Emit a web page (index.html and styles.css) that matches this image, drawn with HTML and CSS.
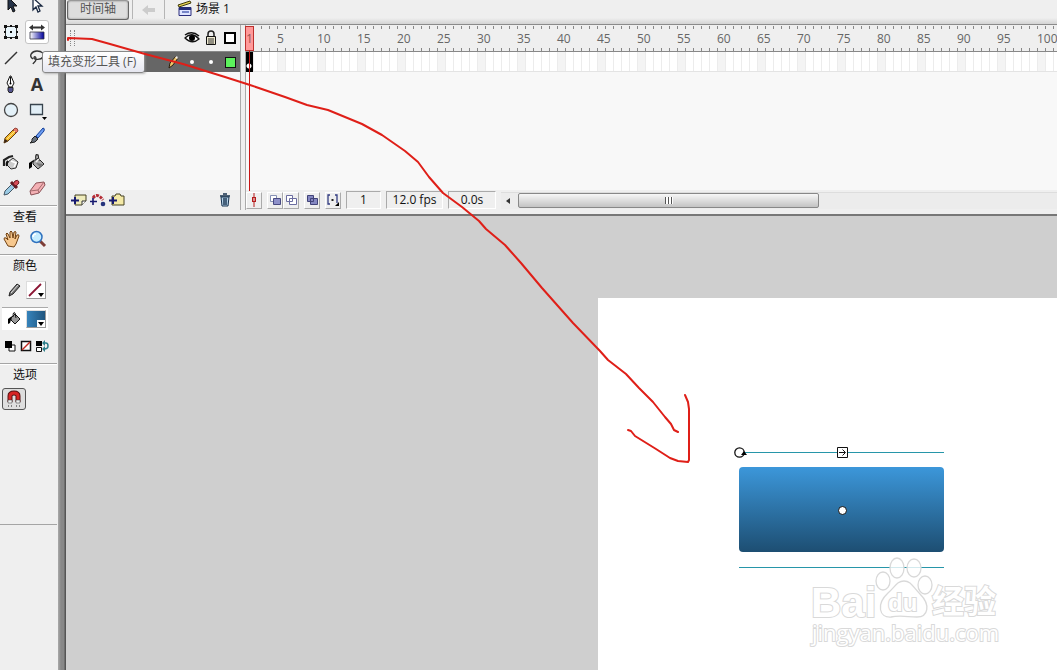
FILE: index.html
```html
<!DOCTYPE html>
<html lang="zh-CN">
<head>
<meta charset="utf-8">
<title>场景 1</title>
<link rel="stylesheet" href="styles.css">
</head>
<body>
<div class="app">
  <aside class="tools">
    <div class="tool-grid">
      <button class="tool" aria-label="选择"><svg width="18" height="26"><path d="M6 4v13l3-3 2 5 2-1-2-5h4z" fill="#253348" stroke="#111"/></svg></button>
      <button class="tool" aria-label="部分选取"><svg width="18" height="26"><path d="M5 5v12l3-3 2 5 2-1-2-5h4z" fill="#fff" stroke="#1b2a42" stroke-width="1.3"/></svg></button>
      <button class="tool" aria-label="任意变形"><svg width="18" height="18"><path d="M3.500 3.500h11v11h-11z" fill="#e9f5fb" stroke="#333"/><path d="M2 2h3v3H2zM13 2h3v3h-3zM2 13h3v3H2zM13 13h3v3h-3zM8 2h2v2H8zM8 14h2v2H8zM2 8h2v2H2zM14 8h2v2h-2zM8 8h2v2H8z" fill="#111"/></svg></button>
      <button class="tool active" aria-label="填充变形"><svg width="18" height="18"><defs><linearGradient id="gf"><stop offset="0" stop-color="#fff"/><stop offset="1" stop-color="#00009b"/></linearGradient></defs><path d="M2 9h14v7H2z" fill="url(#gf)" stroke="#334" stroke-width=".8"/><path d="M1 4.500l4-3v2h2v2H5v2zM17 4.500l-4-3v2h-2v2h2v2zM7 3.500h4v2H7z" fill="#333"/></svg></button>
      <button class="tool" aria-label="线条"><svg width="18" height="18"><path d="M3 15L15 3" stroke="#333" stroke-width="1.500"/></svg></button>
      <button class="tool" aria-label="套索"><svg width="18" height="18"><path d="M5 10C0 7 4 2 9 2s8 3 6 6-9 3-9 1 2-2 2 1-2 3-3 5" fill="none" stroke="#333" stroke-width="1.400"/></svg></button>
      <button class="tool" aria-label="钢笔"><svg width="18" height="18"><path d="M8 1L5 8l2 4h3l2-4-3-7z" fill="#fff" stroke="#111"/><path d="M8.500 2v7" stroke="#111"/><circle cx="8.500" cy="8.500" r="1"/><path d="M6 12.500h5v3l-1 2H7l-1-2z" fill="#55558f" stroke="#222"/></svg></button>
      <button class="tool letter">A</button>
      <button class="tool" aria-label="椭圆"><svg width="18" height="18"><circle cx="9" cy="9" r="6.500" fill="#e4f1f8" stroke="#444" stroke-width="1.300"/></svg></button>
      <button class="tool" aria-label="矩形"><svg width="20" height="20"><path d="M3.500 4.500h12v10h-12z" fill="#e1eef6" stroke="#38444e" stroke-width="1.300"/><path d="M15 17h5l-2.500 3z"/></svg></button>
      <button class="tool" aria-label="铅笔"><svg width="18" height="18"><path d="M2 16l1-5L12 2l3 3-9 9z" fill="#f4bb2d" stroke="#664012"/><path d="M11 3l2-2q3 0 3 3l-2 2z" fill="#e77968" stroke="#85352c" stroke-width=".8"/><path d="M2 16l1-4 3 2z" fill="#392519"/><path d="M5 12l8-8" stroke="#ffe38a"/></svg></button>
      <button class="tool" aria-label="刷子"><svg width="18" height="18"><path d="M8 9l7-8q2 0 1 3l-6 7z" fill="#6b9cf1" stroke="#123e98"/><path d="M7 9l3 3q-2 4-8 4 3-2 2-4z" fill="#68717e" stroke="#222"/></svg></button>
      <button class="tool" aria-label="墨水瓶"><svg width="18" height="18"><path d="M2 13V7l5-3 4-1" fill="none" stroke="#222" stroke-width="2.200"/><path d="M6 9l5-4 5 4-2 6-5 1-4-4z" fill="#ccc" stroke="#333"/><path d="M9 8l5 2-2 4" fill="none" stroke="#fff" stroke-width="1.500"/><path d="M6 8q-2 2-1 5" fill="none" stroke="#111" stroke-width="2"/></svg></button>
      <button class="tool" aria-label="颜料桶"><svg width="18" height="18"><path d="M5 9l5-4 6 6-6 5-5-5z" fill="#aaa" stroke="#222"/><path d="M8 7q-1-7 2-5l1 6" fill="none" stroke="#222" stroke-width="1.300"/><path d="M7 6l-6 4v6l3-2v-4z"/><path d="M8 10l4 4 3-3" fill="#777"/><path d="M8 9l3-3" stroke="#eee" stroke-width="1.500"/></svg></button>
      <button class="tool" aria-label="滴管"><svg width="18" height="18"><path d="M2 16l1-4 7-7 3 3-7 7z" fill="#9bcbe5" stroke="#445665"/><path d="M9 3l6 6" stroke="#671b24" stroke-width="3"/><path d="M11 5l2-3q3-2 4 1 0 2-3 4z" fill="#d64c58" stroke="#6a1a22"/></svg></button>
      <button class="tool" aria-label="橡皮擦"><svg width="18" height="18"><path d="M2 12l6-8 8-1 1 3-6 8-8 2z" fill="#f4b0b4" stroke="#8b5055"/><path d="M2 12l8-1 6-8M10 11l1 3" fill="none" stroke="#a46a6d"/></svg></button>
    </div>
    <section class="group view-group">
      <h2>查看</h2>
      <div class="pair">
        <button class="tool" aria-label="手形"><svg width="18" height="18"><path d="M5 16L1 9q0-2 2-1l2 2-2-6q1-2 2 0l2 4V2q1-2 2 0l1 6 1-6q2-1 2 0l-1 7 2-4q2-1 2 1l-3 8-2 3z" fill="#f7c88e" stroke="#704113"/></svg></button>
        <button class="tool" aria-label="缩放"><svg width="18" height="18"><path d="M11 11l5 5" stroke="#7d3d37" stroke-width="3"/><circle cx="7.500" cy="7" r="5.500" fill="#c6edff" stroke="#2f72bf" stroke-width="1.500"/><path d="M4 7q0-3 3-3" stroke="#fff" fill="none" stroke-width="1.500"/></svg></button>
      </div>
    </section>
    <section class="group color-group">
      <h2>颜色</h2>
      <div class="color-row stroke-row">
        <svg width="16" height="16"><path d="M3 14l1-4 7-8 3 2-7 8z" fill="#777" stroke="#222"/><path d="M5 11l7-8" stroke="#ddd"/></svg>
        <button class="swatch" aria-label="笔触颜色"><svg width="18" height="16"><path d="M2 14L14 2" stroke="#8c1534" stroke-width="1.800"/><path d="M11 11h6l-3 4z"/></svg></button>
      </div>
      <div class="color-row fill-row">
        <svg width="16" height="16"><path d="M5 7l4-4 5 5-5 5-4-4z" fill="#999" stroke="#111"/><path d="M7 6q0-6 2-4l1 5" fill="none" stroke="#111"/><path d="M6 5L2 8v5l2-1z"/></svg>
        <button class="swatch fill" aria-label="填充颜色"><svg width="18" height="16"><path d="M10 9h8v7h-8z" fill="#fff"/><path d="M11 11h6l-3 4z"/></svg></button>
      </div>
      <div class="color-actions">
        <button aria-label="黑白"><svg width="12" height="12"><path d="M5 5h6v6H5z" fill="#fff" stroke="#111"/><path d="M1 1h7v7H1z"/></svg></button>
        <button aria-label="没有颜色"><svg width="12" height="12"><path d="M1.500 1.500h9v9h-9z" fill="#fff" stroke="#111" stroke-width="1.500"/><path d="M2 10l8-8" stroke="#c22a20" stroke-width="1.500"/></svg></button>
        <button aria-label="交换颜色"><svg width="13" height="12"><path d="M0 1h6v5H0z"/><path d="M.500 7.500h5v4h-5z" fill="#fff" stroke="#111"/><path d="M7 3h3q2 0 2 3t-4 3" fill="none" stroke="#2c7e8b" stroke-width="1.500"/><path d="M9 0v6L6 3zM9 6v6L6 9z" fill="#2c7e8b"/></svg></button>
      </div>
    </section>
    <section class="group option-group">
      <h2>选项</h2>
      <button class="magnet" aria-label="贴紧至对象"><svg width="16" height="18"><path d="M4 12V6q0-3 4-3t4 3v6" fill="none" stroke="#571313" stroke-width="5"/><path d="M4 12V6q0-3 4-3t4 3v6" fill="none" stroke="#d72525" stroke-width="3"/><path d="M2 10h4v3H2zM10 10h4v3h-4z" fill="#eee" stroke="#333" stroke-width=".5"/><path d="M2 16h1M5 16h1M10 16h1M13 16h1" stroke="#222"/></svg></button>
    </section>
    <div class="tip" role="tooltip">填充变形工具 (F)</div>
  </aside>
  <div class="splitter"></div>
  <main class="work">
    <header class="topbar">
      <button class="timeline-btn">时间轴</button>
      <button class="back" aria-label="返回"><svg width="16" height="12"><path d="M1 6l6-5v3h7v4H7v3z" fill="#ccc"/></svg></button>
      <div class="scene"><svg width="16" height="17"><path d="M2 7.500h12v8H2z" fill="#dfe4ff" stroke="#2b2d7d"/><path d="M2 7h12v3H2z" fill="#252c77"/><path d="M1 5L13 1l1 2L2 7z" fill="#e6d253" stroke="#40390b"/><path d="M5 12h7" stroke="#7785c7" stroke-width="2"/></svg><span>场景 1</span></div>
    </header>
    <section class="timeline">
      <div class="layers">
        <div class="layer-head">
          <i class="grip"></i>
          <svg width="16" height="14"><path d="M1 7q7-7 14 1-7 6-14-1z" fill="#fff" stroke="#111" stroke-width="1.300"/><circle cx="8" cy="7" r="3"/><path d="M1 4q7-5 14 1" fill="none" stroke="#111" stroke-width="1.500"/></svg>
          <svg width="14" height="16"><path d="M4 7V4q0-3 3-3t3 3v3" fill="none" stroke="#222" stroke-width="1.500"/><path d="M2.500 6.500h9v8h-9z" fill="#eee9cf" stroke="#111"/><path d="M4 9h6M4 11h6M4 13h6" stroke="#333"/></svg>
          <i class="outline"></i>
        </div>
        <div class="layer-row">
          <svg width="14" height="14"><path d="M3 13l1-5 6-7 2 2-5 7z" fill="#f0c76a" stroke="#2b1c0e"/><path d="M9 2l2-1 1 2-1 1z" fill="#eee"/></svg>
          <i class="dot"></i><i class="dot"></i><i class="green"></i>
        </div>
        <div class="layer-space"></div>
        <div class="layer-foot">
          <button aria-label="插入图层"><svg width="16" height="14"><path d="M4 2h11v6l-4 4H4z" fill="#eeebbb" stroke="#444123"/><path d="M15 8h-4v4" fill="#fff" stroke="#333"/><path d="M4 4v7M0 7.500h8" stroke="#171a70" stroke-width="2"/></svg></button>
          <button aria-label="引导层"><svg width="16" height="14"><path d="M3 5q4-6 10 2" fill="none" stroke="#b42b35" stroke-width="3" stroke-dasharray="3 1"/><path d="M3 5v7M0 8.500h7" stroke="#171a70" stroke-width="1.600"/><circle cx="13" cy="11" r="2.300" fill="#25347c"/></svg></button>
          <button aria-label="文件夹"><svg width="16" height="14"><path d="M3 3h3l1-2h4l1 2h3v9H3z" fill="#f4e9a6" stroke="#444123"/><path d="M4 4v7M0 7.500h8" stroke="#171a70" stroke-width="2"/></svg></button>
          <button class="trash" aria-label="删除图层"><svg width="12" height="14"><path d="M2 4h8l-1 9H3z" fill="#b6d2e9" stroke="#17324e"/><path d="M1 3h10M4 1h4M5 5v7M7 5v7" stroke="#17324e" stroke-width="1.400"/></svg></button>
        </div>
      </div>
      <div class="gutter"></div>
      <div class="frames">
        <div class="ruler"><span class="first"></span><span>5</span><span>10</span><span>15</span><span>20</span><span>25</span><span>30</span><span>35</span><span>40</span><span>45</span><span>50</span><span>55</span><span>60</span><span>65</span><span>70</span><span>75</span><span>80</span><span>85</span><span>90</span><span>95</span><span>100</span></div>
        <div class="frame-row"><i class="key"></i></div>
        <div class="frame-space"></div>
        <div class="frame-foot">
          <button class="mini" aria-label="帧居中"><svg width="12" height="14"><path d="M6 0v14" stroke="#b51c1c"/><path d="M4 4h4v5H4z" fill="#b51c1c"/><path d="M5.500 5h1v3h-1z" fill="#fff"/></svg></button>
          <div class="pairbtn"><button class="mini" aria-label="绘图纸外观"><svg width="14" height="14"><path d="M2.500 2.500h6v6h-6z" fill="#fff" stroke="#8590b5"/><path d="M5.500 5.500h7v6h-7z" fill="#8e91ca" stroke="#484a82"/></svg></button><button class="mini" aria-label="绘图纸轮廓"><svg width="14" height="14"><path d="M2.500 2.500h6v6h-6zM5.500 5.500h7v6h-7z" fill="#fff" stroke="#6b6da0"/></svg></button></div>
          <button class="mini" aria-label="编辑多个帧"><svg width="14" height="14"><path d="M2.500 2.500h6v6h-6zM5.500 5.500h7v6h-7z" fill="#8588c2" stroke="#414379"/></svg></button>
          <button class="mini" aria-label="修改标记"><svg width="14" height="14"><path d="M4 2H2v9h2M9 2h2v8" fill="none" stroke="#333d82" stroke-width="1.300"/><path d="M5.500 6h2v2h-2z" fill="#222"/><path d="M13 9v4H9z"/></svg></button>
          <output class="field frame-no">1</output><output class="field fps">12.0 fps</output><output class="field time">0.0s</output>
          <div class="scroll"><i class="arrow"></i><div class="thumb"><i></i></div></div>
        </div>
        <div class="playhead"><span>1</span></div>
      </div>
    </section>
    <section class="stage">
      <div class="canvas">
        <i class="guide top"></i>
        <div class="shape"></div>
        <i class="guide bottom"></i>
        <svg class="handles" width="120" height="80"><circle cx="6.500" cy="8.500" r="4.700" fill="#fff" stroke="#111" stroke-width="1.300"/><path d="M8 11l3-4 3 4z"/><path d="M104.500 3.500h10v10h-10z" fill="#fff" stroke="#111"/><path d="M106 8.500h6M109.500 5.500l3 3-3 3" fill="none" stroke="#111"/><circle cx="109.500" cy="66.500" r="4" fill="#fff" stroke="#111"/></svg>
        <svg class="mark" width="204" height="104">
          <g fill="#fff" fill-opacity=".8" stroke="#d9d9d9" stroke-width="1.300">
            <ellipse cx="77" cy="33" rx="7" ry="9"/><ellipse cx="91" cy="20" rx="7" ry="10"/><ellipse cx="108" cy="20" rx="7" ry="9"/><ellipse cx="119" cy="37" rx="7" ry="9"/>
            <path d="M82 45c7-6 9-12 16-12s9 6 16 13c11 11 8 23-3 23-9 0-17-2-26 0-12 1-15-13-3-24z"/>
            <text x="5" y="69" class="logo">Bai</text><text x="82" y="63" class="du">du</text><text x="126" y="65" class="exp">经验</text><text x="6" y="93" class="url">jingyan.baidu.com</text>
          </g>
        </svg>
      </div>
    </section>
  </main>
  <svg class="ink" width="1057" height="670"><g fill="none" stroke="#df1f18" stroke-width="2" stroke-linejoin="round" stroke-linecap="round"><path d="M68 40V38L92 39 110 44 145 54 183 64 225 77 250 85 285 97 307 105 328 110 362 124 382 135 405 151 418 162 429 177 443 193 462 207 479 221 486 229 505 245 521 263 542 288 573 323 600 351 608 360 626 374 639 388 653 402 665 417 671 424 674 430 678 432"/><path d="M685 395l3 7 1 7v51l-1 2-10-1-8-3-14-9-21-13-4-5-3-1"/></g></svg>
</div>
</body>
</html>
```

FILE: styles.css
```css
* { box-sizing: border-box; }
body { margin: 0; font: 12px/16px "Open Sans", "Noto Sans CJK SC", sans-serif; color: #111; }
button { margin: 0; padding: 0; border: 0; background: none; font: inherit; color: inherit; }
svg { display: block; flex: none; }
.app { position: relative; display: flex; height: 100vh; overflow: hidden; background: #efefef; }

.tools { position: relative; z-index: 2; flex: none; width: 58px; background: #efefef; }
.tool-grid { display: grid; grid-template-columns: 22px 30px; grid-template-rows: 19px repeat(7, 26px); align-items: end; height: 205px; }
.tool { display: flex; align-items: center; justify-content: center; width: 22px; height: 26px; }
.tool:nth-child(even) { width: 24px; margin-left: 3px; }
.tool-grid .active { height: 24px; margin-bottom: 1px; background: #fff; border: 1px solid #c4c4c4; border-radius: 3px; }
.letter { font: bold 18px/26px "Open Sans", sans-serif; color: #333; }
.group { width: 57px; border-top: 1px solid #a5a5a5; box-shadow: inset 0 1px #fff; }
h2 { margin: 0; padding: 2px 0 0 13px; font: 12px/16px "Noto Sans CJK SC", sans-serif; }
.view-group { height: 49px; }
.color-group { height: 109px; }
.option-group { height: 162px; border-bottom: 1px solid #a5a5a5; }
.pair { display: flex; padding: 2px 0 0 1px; }
.color-row { display: flex; align-items: center; gap: 4px; padding-left: 4px; width: 46px; margin-left: 2px; }
.stroke-row { height: 35px; border-bottom: 1px solid #aaa; }
.fill-row { height: 22px; background: #fff; }
.swatch { width: 20px; height: 18px; background: #fff; border: 1px solid; border-color: #ddd #999 #999 #ddd; }
.swatch.fill { background: linear-gradient(90deg, #3683bb, #20557e); }
.color-actions { display: flex; gap: 4px; padding: 10px 4px 0; }
.magnet { display: grid; place-items: center; width: 24px; height: 22px; margin: 6px 2px; border: 1px solid #555; border-radius: 3px; background: #dedede; }
.tip { position: absolute; left: 42px; top: 51px; width: 103px; height: 22px; padding: 2px 0 0 5px; border: 1px solid #888; border-radius: 3px; background: linear-gradient(#fff, #e6e7f0); color: #555; white-space: nowrap; box-shadow: 1px 1px 2px #8888; }
.splitter { flex: none; width: 8px; background: linear-gradient(90deg, #aaa, #888 3px, #888 6px, #555 7px); }

.work { display: flex; flex: 1; flex-direction: column; min-width: 0; }
.topbar { display: flex; flex: none; height: 25px; padding-left: 1px; background: linear-gradient(#efefef 18px, #d4d4d4); border-bottom: 1px solid #8b8b8b; }
.timeline-btn { width: 62px; height: 20px; padding-bottom: 2px; border: 1px solid #666; border-top-color: #999; border-radius: 3px; background: #dedede; box-shadow: inset 0 0 2px #777; color: #555; }
.back { display: grid; place-items: center; width: 33px; height: 19px; margin-left: 3px; border: solid #b5b5b5; border-width: 0 1px; }
.scene { display: flex; gap: 3px; height: 18px; padding-left: 12px; line-height: 18px; }
.timeline { display: grid; flex: none; grid-template-columns: 174px 6px minmax(0, 1fr); height: 191px; padding-bottom: 4px; background: #efefef; border-bottom: 2px solid #777; }
.layers, .frames { display: flex; flex-direction: column; min-width: 0; }
.layer-head { display: flex; flex: none; align-items: center; gap: 4px; height: 27px; padding-right: 4px; border-bottom: 1px solid #888; }
.grip { width: 5px; height: 16px; margin: 0 auto 0 4px; border: dotted #888; border-width: 0 1px; }
.outline { width: 12px; height: 12px; margin-left: 2px; border: 2px solid #000; background: #fff; }
.layer-row { display: flex; flex: none; align-items: center; justify-content: end; gap: 15px; height: 20px; padding-right: 4px; background: #666; }
.dot { width: 4px; height: 4px; border-radius: 50%; background: #fff; }
.layer-row svg { margin-right: -5px; }
.green { width: 11px; height: 11px; margin-left: -3px; border: 1px solid #111; background: #5cf25c; }
.layer-space, .frame-space { flex: 1; background: #f8f8f8; }
.layer-foot { display: flex; flex: none; align-items: center; gap: 3px; height: 20px; padding: 0 9px 0 5px; }
.trash { margin-left: auto; }
.gutter { border: solid #aaa; border-width: 0 1px; }

.frames { position: relative; }
.ruler { display: flex; flex: none; height: 27px; overflow: hidden; border-bottom: 1px solid #888; color: #666; line-height: 27px; background: repeating-linear-gradient(90deg, transparent 0 7px, #888 7px 8px) 0 1px / 100% 3px no-repeat, repeating-linear-gradient(90deg, transparent 0 7px, #888 7px 8px) 0 100% / 100% 3px no-repeat, #efefef; }
.ruler span { flex: 0 0 40px; }
.ruler .first { flex-basis: 31px; }
.frame-row { flex: none; height: 20px; border-bottom: 1px solid #e4e4e4; background: repeating-linear-gradient(90deg, transparent 0 7px, #ececec 7px 8px), repeating-linear-gradient(90deg, #fff 0 32px, #f4f4f4 32px 40px); }
.key { display: block; width: 7px; height: 20px; background: radial-gradient(circle at 3px 14px, #fff 2px, #000 3px); }
.frame-foot { display: flex; flex: none; align-items: center; gap: 5px; height: 20px; }
.mini { display: grid; place-items: center; width: 16px; height: 17px; border: 1px solid; border-color: #fff #aaa #aaa #fff; }
.pairbtn { display: flex; }
.field { height: 18px; border: 1px solid; border-color: #aaa #fff #fff #aaa; text-align: center; }
.frame-no { width: 35px; }
.fps { width: 57px; }
.time { width: 48px; }
.scroll { display: flex; flex: 1; align-items: center; height: 17px; border-top: 1px solid #ddd; background: #ececec; }
.arrow { margin: 0 8px 0 5px; border: solid transparent; border-width: 3px 4px 3px 0; border-right-color: #333; }
.thumb { display: grid; place-items: center; width: 301px; height: 15px; border: 1px solid #888; border-radius: 2px; background: linear-gradient(#f7f7f7, #ddd 50%, #c3c3c3); }
.thumb i { width: 8px; height: 7px; background: repeating-linear-gradient(90deg, #555 0 1px, #fff 1px 3px); }
.playhead { position: absolute; left: -1px; top: 1px; width: 9px; height: 25px; border: 1px solid #bd302d; background: #f99; color: #955; line-height: 23px; text-align: center; }
.playhead::after { content: ""; position: absolute; left: 3px; top: 24px; width: 1px; height: 140px; background: #c81414; }

.stage { display: flex; flex: 1; padding: 82px 0 0 532px; background: #cfcfcf; overflow: hidden; }
.canvas { position: relative; flex: 1; background: #fff; }
.shape { position: absolute; left: 141px; top: 169px; width: 205px; height: 85px; border-radius: 4px; background: linear-gradient(#3c97da, #1d4e72); }
.guide { position: absolute; left: 141px; width: 205px; height: 1px; background: #2796a9; }
.top { top: 154px; }
.bottom { top: 269px; }
.handles { position: absolute; left: 135px; top: 146px; }
.mark { position: absolute; left: 208px; top: 250px; }
.mark text { paint-order: stroke; stroke-width: 2px; fill-opacity: 1; }
.logo { font: bold 42px "Liberation Sans", sans-serif; }
.du { font: bold 24px "Liberation Sans", sans-serif; }
.exp { font: bold 32px "Noto Sans CJK SC", sans-serif; }
.url { font: 22px "Open Sans", sans-serif; }
.ink { position: absolute; z-index: 3; left: 0; top: 0; pointer-events: none; }
```
